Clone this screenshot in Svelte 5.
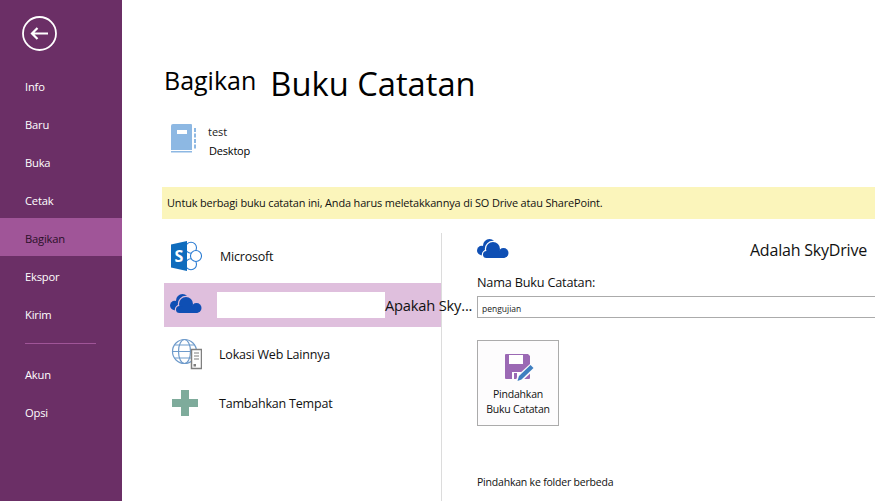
<script lang="ts">
	const topItems = ['Info', 'Baru', 'Buka', 'Cetak', 'Bagikan', 'Ekspor', 'Kirim'];
	const bottomItems = ['Akun', 'Opsi'];
</script>

{#snippet cloudShapes()}
	<circle cx="16" cy="10" r="7" />
	<circle cx="26.500" cy="14" r="5" />
	<circle cx="9.500" cy="15.500" r="3.500" />
	<rect x="9.500" y="13" width="18" height="6" />
{/snippet}

{#snippet cloud(gap)}
	<svg width="32" height="20" viewBox="0 -1 32 20" aria-hidden="true">
		<g fill="#0f4fb4">
			<circle cx="12.500" cy="6.500" r="6.500" />
			<circle cx="4.700" cy="11.500" r="4.700" />
			<rect x="4.700" y="8" width="12" height="8.200" />
		</g>
		<g fill={gap} stroke={gap} stroke-width="2.400">
			{@render cloudShapes()}
		</g>
		<g fill="#0f4fb4">
			{@render cloudShapes()}
		</g>
	</svg>
{/snippet}

<div class="page">
	<nav class="sidebar">
		<svg class="back" width="35" height="35" viewBox="0 0 35 35" aria-hidden="true">
			<circle cx="17.500" cy="17.500" r="16.500" fill="none" stroke="#fff" stroke-width="1.800" />
			<path d="M10 17.500h16M15.500 12l-5.500 5.500 5.500 5.500" fill="none" stroke="#fff" stroke-width="2.200" />
		</svg>
		<ul>
			{#each topItems as item}
				<li class:active={item === 'Bagikan'}>{item}</li>
			{/each}
		</ul>
		<hr />
		<ul>
			{#each bottomItems as item}
				<li>{item}</li>
			{/each}
		</ul>
	</nav>

	<main>
		<header>
			<span class="verb">Bagikan</span>
			<h1>Buku Catatan</h1>
		</header>

		<div class="notebook">
			<svg width="25" height="29" viewBox="0 0 25 29" aria-hidden="true">
				<path fill="#8db8e3" d="M2 0h18a1 1 0 0 1 1 1v25H0V2a2 2 0 0 1 2-2z" />
				<rect x="0" y="27" width="21" height="1.500" fill="#8db8e3" />
				<rect x="6" y="6" width="10" height="4" fill="#fff" />
				<path fill="#8db8e3" d="M23 4h2v4h-2zM23 9.500h2v4h-2zM23 15h2v4h-2zM23 20.500h2v4h-2z" />
			</svg>
			<div class="notebook-text">
				<span class="name">test</span>
				<span class="place">Desktop</span>
			</div>
		</div>

		<p class="notice">Untuk berbagi buku catatan ini, Anda harus meletakkannya di SO Drive atau SharePoint.</p>

		<div class="columns">
			<ul class="places">
				<li>
					<svg class="icon" width="32" height="32" viewBox="0 0 32 32" aria-hidden="true">
						<g fill="#fff" stroke="#2b7cd3" stroke-width="1.100">
							<circle cx="21" cy="7.700" r="5.500" />
							<circle cx="21" cy="24.300" r="5.500" />
							<circle cx="26" cy="16" r="5.500" />
						</g>
						<path fill="#0f6cbd" d="M1 4.500L17 1v30L1 27.500z" />
						<text x="4.500" y="21.500" class="s-mark">S</text>
					</svg>
					<span class="place-label microsoft">Microsoft</span>
				</li>
				<li class="selected">
					<span class="icon">{@render cloud('#dfbfdd')}</span>
					<span class="blank"></span>
					<span class="overflowing">Apakah Sky...</span>
				</li>
				<li>
					<svg class="icon" width="32" height="32" viewBox="0 0 32 32" aria-hidden="true">
						<g fill="none" stroke="#6f9bcb" stroke-width="1.200">
							<circle cx="14.500" cy="13.500" r="12" />
							<ellipse cx="14.500" cy="13.500" rx="6" ry="12" />
							<path d="M2.500 13.500h24M4.500 7h20M4.500 20h20" />
						</g>
						<rect x="21.500" y="11.500" width="10" height="19" fill="#fff" stroke="#7f7f7f" stroke-width="1.500" />
						<path d="M24 15h5M24 18h5M24 21h5" stroke="#7f7f7f" stroke-width="1.100" />
						<rect x="23.500" y="26" width="2.500" height="2.500" fill="#7f7f7f" />
					</svg>
					<span class="place-label">Lokasi Web Lainnya</span>
				</li>
				<li>
					<svg class="icon" width="26" height="26" viewBox="0 0 26 26" aria-hidden="true">
						<path fill="#7eab9b" d="M9 0h8v9h9v8h-9v9H9v-9H0V9h9z" />
					</svg>
					<span class="place-label">Tambahkan Tempat</span>
				</li>
			</ul>

			<section class="detail">
				<div class="detail-head">
					{@render cloud('#fff')}
					<span>Adalah SkyDrive</span>
				</div>
				<label for="nb-name">Nama Buku Catatan:</label>
				<input id="nb-name" type="text" value="pengujian" />
				<button type="button">
					<svg width="30" height="28" viewBox="0 0 30 28" aria-hidden="true">
						<path fill="#9b69b4" d="M1 0h22l2 2v22a1 1 0 0 1-1 1H1a1 1 0 0 1-1-1V1a1 1 0 0 1 1-1z" />
						<rect x="4" y="1" width="14" height="9" fill="#fff" />
						<rect x="7" y="18" width="9" height="7" fill="#fff" />
						<rect x="9" y="19" width="3" height="6" fill="#9b69b4" />
						<path fill="#fdfcfd" d="M10 28l3-7 12-11 5 3v2L16 28z" />
						<path fill="#3f7fc0" d="M12.500 27l1.500-5 11.500-11 3 3L16.500 25.500z" />
					</svg>
					<span>Pindahkan<br />Buku Catatan</span>
				</button>
				<p class="move">Pindahkan ke folder berbeda</p>
			</section>
		</div>
	</main>
</div>

<style>
	:global(body) {
		margin: 0;
		overflow: hidden;
		background: #fff;
	}

	.page {
		display: flex;
		width: 875px;
		height: 501px;
		overflow: hidden;
		font-family: 'Open Sans', 'Liberation Sans', sans-serif;
		color: #1a1a1a;
	}

	.sidebar {
		flex: none;
		width: 122px;
		background: #6b2f66;
		color: #fff;
		padding-top: 16px;
		box-sizing: border-box;
	}

	.back {
		display: block;
		margin: 0 0 15px 22px;
	}

	.sidebar ul {
		list-style: none;
		margin: 0;
		padding: 0;
	}

	.sidebar li {
		height: 38px;
		line-height: 42px;
		padding-left: 25px;
		font-size: 11.200px;
		letter-spacing: -0.200px;
	}

	.sidebar li.active {
		background: #a05598;
		color: #2a1028;
	}

	.sidebar hr {
		width: 71px;
		height: 1px;
		margin: 11px 0 10px 25px;
		border: 0;
		background: #a05598;
	}

	main {
		flex: 1;
		min-width: 0;
		padding-top: 64px;
		padding-left: 40px;
	}

	header {
		display: flex;
		align-items: flex-start;
		gap: 14px;
		padding-left: 2px;
		height: 44px;
		color: #000;
	}

	.verb {
		margin-top: 1px;
		font-size: 25px;
		line-height: 30px;
	}

	h1 {
		margin: 0;
		font-size: 32.700px;
		line-height: 40px;
		font-weight: 400;
	}

	.notebook {
		display: flex;
		gap: 12px;
		padding: 16px 0 0 9px;
		height: 63px;
		box-sizing: border-box;
	}

	.notebook-text {
		display: flex;
		flex-direction: column;
		gap: 4px;
		font-size: 11px;
		line-height: 15px;
	}

	.place {
		margin-left: 1px;
		color: #000;
		letter-spacing: -0.200px;
	}

	.notice {
		margin: 16px 0 0;
		height: 32px;
		line-height: 32px;
		padding-left: 5px;
		background: #fbf5bb;
		font-size: 10.950px;
		letter-spacing: -0.150px;
		white-space: nowrap;
		color: #111;
	}

	.columns {
		display: flex;
		margin-top: 14px;
	}

	.places {
		flex: none;
		list-style: none;
		width: 280px;
		height: 268px;
		box-sizing: border-box;
		margin: 0;
		padding: 1px 0 0 2px;
		display: flex;
		flex-direction: column;
		gap: 5px;
		border-right: 1px solid #dcdcdc;
	}

	.places li {
		display: flex;
		align-items: center;
		height: 44px;
		font-size: 12.500px;
		letter-spacing: -0.200px;
		white-space: nowrap;
		color: #111;
	}

	.places .icon {
		flex: none;
		margin-left: 6px;
		display: block;
		width: 32px;
	}

	.places li:last-child .icon {
		width: 26px;
		margin-left: 8px;
		margin-right: 4px;
	}

	.s-mark {
		font-family: 'Open Sans', sans-serif;
		font-weight: 700;
		font-size: 16px;
		fill: #fff;
	}

	.place-label {
		margin-left: 17px;
	}

	.place-label.microsoft {
		margin-left: 18px;
	}

	.places li.selected {
		background: #dfbfdd;
	}

	.blank {
		flex: none;
		width: 168px;
		height: 26px;
		margin-left: 15px;
		background: #fff;
	}

	.overflowing {
		font-size: 14.700px;
	}

	.detail {
		flex: 1;
		min-width: 0;
		padding-left: 35px;
		padding-top: 5px;
		color: #111;
	}

	.detail-head {
		display: flex;
		justify-content: space-between;
		align-items: flex-end;
		height: 20px;
		padding-right: 8px;
		font-size: 16px;
		letter-spacing: -0.200px;
	}

	.detail-head span {
		line-height: 15px;
	}

	label {
		display: block;
		margin-top: 16px;
		font-size: 12.700px;
		line-height: 17px;
		letter-spacing: -0.200px;
	}

	input {
		display: block;
		width: calc(100% + 10px);
		height: 22px;
		margin-top: 5px;
		box-sizing: border-box;
		border: 1px solid #ababab;
		padding: 2px 4px 0;
		font: 8.500px 'Open Sans', sans-serif;
		color: #222;
		background: #fff;
	}

	button {
		display: flex;
		flex-direction: column;
		align-items: center;
		width: 82px;
		height: 86px;
		margin-top: 22px;
		padding: 13px 0 0 4px;
		box-sizing: border-box;
		border: 1px solid #ababab;
		background: #fdfcfd;
		font: 10.500px/15px 'Open Sans', sans-serif;
		letter-spacing: -0.200px;
		color: #111;
	}

	button span {
		margin-top: 5px;
		margin-left: -4px;
	}

	.move {
		margin: 49px 0 0;
		font-size: 10.500px;
		line-height: 14px;
		letter-spacing: -0.200px;
	}
</style>
